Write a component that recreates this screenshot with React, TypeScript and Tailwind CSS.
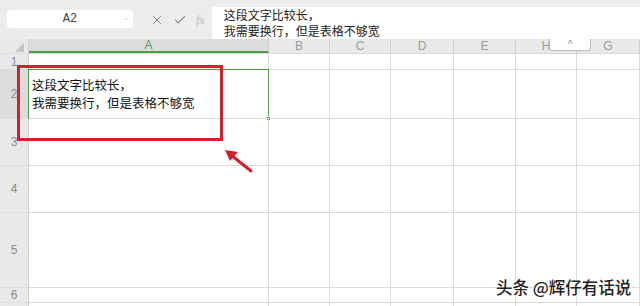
import { X, Check } from "lucide-react";

const cols = ["A", "B", "C", "D", "E", "H", "G"];
const rowHeights = ["h-[16px]", "h-[49px]", "h-[47px]", "h-[47px]", "h-[75px]", "h-[15px]", "h-[4px]"];
const rowLabels = ["1", "2", "3", "4", "5", "6", "7"];
const colWidths = ["w-[240px]", "w-[61px]", "w-[61px]", "w-[63px]", "w-[62px]", "w-[61px]", "w-[63px]"];

const font = { fontFamily: '"Noto Sans CJK SC", "Noto Sans", sans-serif' };

function TopBar() {
  return (
    <div className="flex h-[39px] bg-[#ececec] items-start">
      <div className="ml-[7px] mt-[10px] w-[126px] h-[18px] bg-white rounded-sm relative flex items-center justify-center">
        <span className="text-[12px] text-[#444] font-['Liberation_Mono',monospace]">A2</span>
        <span className="absolute right-[4px] top-[3px] text-[7px] text-[#bbb]">⌄</span>
      </div>
      <div className="flex items-center gap-[9px] ml-[17px] mt-[11px] text-[#777]">
        <X size={14} strokeWidth={1.6} />
        <Check size={14} strokeWidth={1.8} />
        <span className="text-[12px] italic text-[#bbb] font-['Liberation_Serif',serif]">fx</span>
      </div>
      <div className="ml-[7px] mt-[7px] flex-1 h-[32px] bg-white pl-[12px] text-[12px] leading-[16px] text-[#222]" style={font}>
        <div>这段文字比较长，</div>
        <div>我需要换行，但是表格不够宽</div>
      </div>
    </div>
  );
}

export default function App() {
  return (
    <div className="relative w-[640px] h-[306px] overflow-hidden bg-white font-['Liberation_Sans',sans-serif]">
      <TopBar />
      <div className="flex">
        <div className="w-[29px] shrink-0 bg-[#e9e9e9] border-r border-[#d0d0d0]">
          <div className="h-[14px] relative">
            <div className="absolute right-[4px] bottom-[1px] w-0 h-0 border-l-[9px] border-l-transparent border-b-[9px] border-b-[#c4c4c4]" />
          </div>
          {rowLabels.map((r, i) => (
            <div
              key={r}
              className={`${rowHeights[i]} flex items-center justify-center text-[12px] text-[#8a8a8a] border-t border-[#dedede] ${
                r === "2" ? "bg-[#dcdcdc]" : ""
              }`}
            >
              {rowHeights[i] === "h-[4px]" ? "" : r}
            </div>
          ))}
        </div>
        {cols.map((c, ci) => (
          <div key={c} className={`${colWidths[ci]} shrink-0`}>
            <div
              className={`h-[14px] flex items-center justify-center text-[12px] leading-none border-r border-[#d0d0d0] ${
                c === "A" ? "bg-[#dcdcdc] text-[#5a9a52] border-b-2 border-b-[#4e9a45]" : "bg-[#e9e9e9] text-[#999]"
              }`}
            >
              {c}
            </div>
            {rowHeights.map((h, ri) => (
              <div key={ri} className={`${h} border-r border-t border-[#dadada] relative`}>
                {c === "A" && ri === 1 && (
                  <div
                    className="absolute -left-[1px] -top-[1px] -right-[1px] -bottom-[1px] border-[1.5px] border-[#4e9a45] pl-[3px] pt-[6px] text-[12.5px] leading-[18px] text-[#111]"
                    style={font}
                  >
                    <div>这段文字比较长，</div>
                    <div>我需要换行，但是表格不够宽</div>
                    <div className="absolute -right-[3px] -bottom-[3px] w-[5px] h-[5px] bg-[#4e9a45] border border-white" />
                  </div>
                )}
              </div>
            ))}
          </div>
        ))}
      </div>

      <div className="absolute left-[549px] top-[39px] w-[42px] h-[12px] bg-white border border-t-0 border-[#bdbdbd] rounded-b-[3px] flex items-center justify-center text-[10px] text-[#888] leading-none">
        ^
      </div>

      <div className="absolute left-[17px] top-[65px] w-[206px] h-[76px] border-[3px] border-[#d4202a]" />

      <svg className="absolute left-[215px] top-[143px]" width="45" height="36" viewBox="0 0 45 36">
        <line x1="36" y1="28" x2="16" y2="12" stroke="#d4202a" strokeWidth="3" strokeLinecap="round" />
        <polygon points="10,7 23,9 15,18" fill="#d4202a" />
      </svg>

      <div
        className="absolute left-[496px] top-[277px] text-[16.5px] leading-[21px] font-medium text-[#222]"
        style={{ ...font, textShadow: "0 0 2px #fff, 0 0 2px #fff, 1px 1px 1px #fff" }}
      >
        头条 @辉仔有话说
      </div>
    </div>
  );
}
